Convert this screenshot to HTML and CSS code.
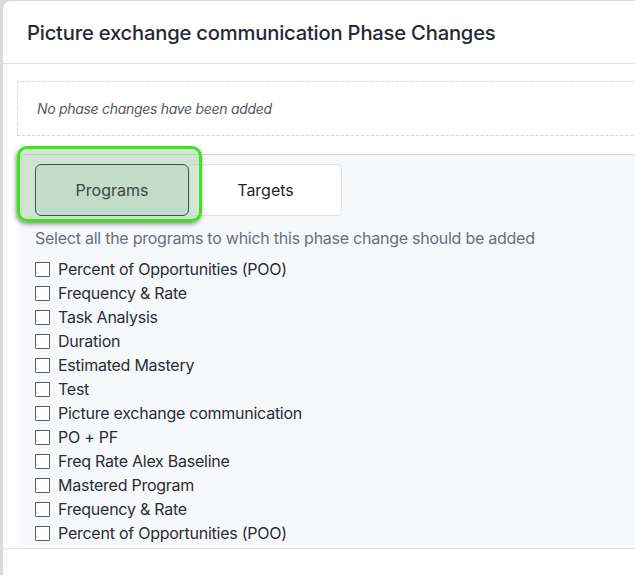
FILE: index.html
```html
<!DOCTYPE html>
<html>
<head>
<meta charset="utf-8">
<link rel="stylesheet" href="styles.css">
</head>
<body>
<div class="panel">
  <div class="header"><h1 class="title">Picture exchange communication Phase Changes</h1></div>
  <div class="content">
    <div class="empty">No phase changes have been added</div>
    <div class="section">
      <div class="tabs">
        <div class="highlight"></div>
        <button class="tab tab-active">Programs</button>
        <button class="tab">Targets</button>
      </div>
      <p class="hint">Select all the programs to which this phase change should be added</p>
      <ul class="list">
        <li class="item"><span class="box"></span>Percent of Opportunities (POO)</li>
        <li class="item"><span class="box"></span>Frequency &amp; Rate</li>
        <li class="item"><span class="box"></span>Task Analysis</li>
        <li class="item"><span class="box"></span>Duration</li>
        <li class="item"><span class="box"></span>Estimated Mastery</li>
        <li class="item"><span class="box"></span>Test</li>
        <li class="item"><span class="box"></span>Picture exchange communication</li>
        <li class="item"><span class="box"></span>PO + PF</li>
        <li class="item"><span class="box"></span>Freq Rate Alex Baseline</li>
        <li class="item"><span class="box"></span>Mastered Program</li>
        <li class="item"><span class="box"></span>Frequency &amp; Rate</li>
        <li class="item"><span class="box"></span>Percent of Opportunities (POO)</li>
      </ul>
    </div>
  </div>
  <div class="footer"></div>
</div>
</body>
</html>
```
FILE: styles.css
```css
html, body {
  margin: 0;
  padding: 0;
  background: #dadada;
  overflow: hidden;
  height: 575px;
}
body {
  font-family: Inter, "Noto Sans", sans-serif;
  color: #23262f;
}
.panel {
  margin: 1px 0 0 3px;
  width: 760px;
  height: 574px;
  background: #ffffff;
  border-radius: 8px 0 0 0;
}
.header {
  height: 62px;
  border-bottom: 1px solid #e2e2e4;
  display: flex;
  align-items: center;
  padding-left: 24px;
}
.title {
  margin: 0;
  font-size: 20.2px;
  font-weight: 500;
  letter-spacing: -0.2px;
  color: #262935;
}
.content {
  padding: 17px 0 0 14px;
}
.empty {
  height: 53px;
  border: 1px dashed #d4d4d6;
  display: flex;
  align-items: center;
  padding-left: 19px;
  font-size: 14px;
  font-style: italic;
  color: #55585f;
  letter-spacing: -0.3px;
}
.section {
  margin: 18px 0 0 2px;
  background: #f7f8fa;
  border-top: 1px solid #d6d6d8;
  border-radius: 6px 0 0 6px;
  padding: 9px 0 0 16px;
  height: 381px;
}
.tabs {
  position: relative;
  display: flex;
  width: 307px;
}
.highlight {
  position: absolute;
  z-index: 1;
  left: -18px;
  top: -18px;
  width: 179px;
  height: 70px;
  border: 3px solid #3be51c;
  border-radius: 10px;
  background: rgba(150, 200, 150, 0.42);
  box-shadow: -1px 2px 4px rgba(0, 0, 0, 0.45);
}
.tab {
  width: 153px;
  height: 52px;
  font-family: inherit;
  font-size: 16px;
  color: #23262f;
  background: #ffffff;
  border: 1px solid #e2e3e8;
  border-radius: 5px;
  padding: 0;
}
.tab-active {
  position: relative;
  z-index: 2;
  width: 154px;
  background: #c2dcc8;
  border: 1px solid #2f5c55;
  border-radius: 6px;
  color: #3a4742;
}
.hint {
  margin: 11px 0 0 0;
  font-size: 16px;
  line-height: 22px;
  color: #6c6f78;
  letter-spacing: -0.25px;
}
.list {
  list-style: none;
  margin: 8px 0 0 0;
  padding: 0;
}
.item {
  height: 24px;
  display: flex;
  align-items: center;
  font-size: 16px;
  color: #2a2d35;
  letter-spacing: -0.25px;
}
.box {
  width: 13px;
  height: 13px;
  border: 1.5px solid #585c6c;
  border-radius: 1px;
  background: #ffffff;
  margin-right: 8px;
  flex: none;
}
.footer {
  margin-top: 3px;
  border-top: 1px solid #e2e2e4;
}
```
